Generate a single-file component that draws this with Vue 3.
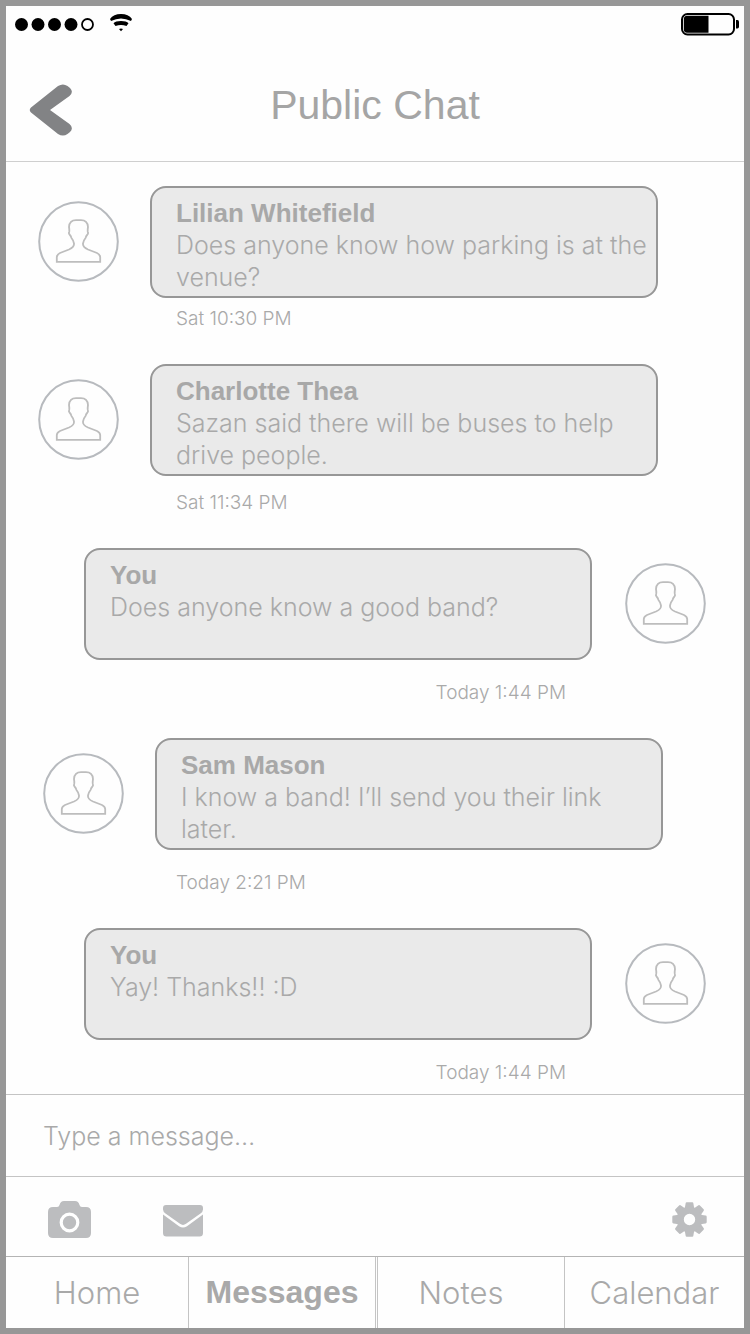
<script setup>
import { ref } from 'vue'

const draft = ref('')

const messages = [
  { author: 'Lilian Whitefield', text: 'Does anyone know how parking is at the venue?', time: 'Sat 10:30 PM', variant: 'tight' },
  { author: 'Charlotte Thea', text: 'Sazan said there will be buses to help drive people.', time: 'Sat 11:34 PM', variant: 'medium' },
  { author: 'You', text: 'Does anyone know a good band?', time: 'Today 1:44 PM', variant: 'own' },
  { author: 'Sam Mason', text: 'I know a band! I’ll send you their link later.', time: 'Today 2:21 PM', variant: 'inset' },
  { author: 'You', text: 'Yay! Thanks!! :D', time: 'Today 1:44 PM', variant: 'own' }
]

const tabs = [
  { label: 'Home', name: 'home' },
  { label: 'Messages', name: 'messages', active: true },
  { label: 'Notes', name: 'notes' },
  { label: 'Calendar', name: 'calendar' }
]
</script>

<template>
  <div class="screen">
    <div class="status">
      <svg class="signal" viewBox="0 0 120 24" width="120" height="24" aria-hidden="true">
        <circle cx="7.500" cy="12.500" r="6.500" />
        <circle cx="24" cy="12.500" r="6.500" />
        <circle cx="40.500" cy="12.500" r="6.500" />
        <circle cx="57" cy="12.500" r="6.500" />
        <circle cx="73.500" cy="12.500" r="5.500" fill="none" stroke="#000" stroke-width="1.800" />
        <path d="M96 7 Q99.500 2 107 2 Q114.500 2 118 7 L117 9 Q107 3.800 97 9 Z" />
        <path d="M99.500 11.300 Q101.500 9 107 9 Q112.500 9 114.500 11.300 L112.500 14 Q107 11.800 101.500 14 Z" />
        <path d="M105 17 Q107 16 109 17 L107 19.200 Z" />
      </svg>
      <svg class="battery" viewBox="0 0 58 24" width="58" height="24" aria-hidden="true">
        <rect x="1" y="2" width="52" height="20.500" rx="5.500" fill="none" stroke="#000" stroke-width="2" />
        <path d="M6 3.800 H27.500 V20.800 H6 Q2.800 20.800 2.800 17 V7.500 Q2.800 3.800 6 3.800 Z" />
        <path d="M55 8 H56.500 Q58 8 58 10 V14.500 Q58 16.500 56.500 16.500 H55 Z" />
      </svg>
    </div>

    <header class="header">
      <button class="back" type="button" aria-label="Back">
        <svg viewBox="0 0 44 52" width="44" height="52" aria-hidden="true">
          <path d="M29 2 Q34 -1 38.500 2 L41 4 Q45 8 40.500 12 L21 26 L40.500 40 Q45 44 41 48 L38.500 50 Q34 53 29 50 L2 28.500 Q-0.500 26 2 23.500 Z" fill="#828385" />
        </svg>
      </button>
      <h1>Public Chat</h1>
    </header>

    <ol class="messages">
      <li v-for="(message, index) in messages" :key="index" class="message" :class="message.variant">
        <svg class="avatar" viewBox="0 0 81 81" width="81" height="81" aria-hidden="true">
          <circle cx="40.500" cy="40.500" r="39.300" fill="none" stroke="#b7babe" stroke-width="2" />
          <path d="M18.800 60.800 V56 Q19 53.500 22 52 L31 48.500 Q36.500 46 36 42.500 Q35.500 39.500 33.500 37 Q32.700 34.500 31.500 33.500 Q30.500 32 31.200 31 Q31.500 29 31 26 Q31.500 19.200 38 19.200 H43 Q49.500 19.200 50 26 Q49.500 29 49.800 31 Q50.500 32 49.500 33.500 Q48.300 34.500 47.500 37 Q45.500 39.500 45 42.500 Q44.500 46 50 48.500 L59 52 Q62 53.500 62.200 56 V60.800 Z" fill="none" stroke="#bdbdbd" stroke-width="1.800" />
        </svg>
        <div class="body">
          <div class="bubble">
            <h2>{{ message.author }}</h2>
            <p>{{ message.text }}</p>
          </div>
          <time>{{ message.time }}</time>
        </div>
      </li>
    </ol>

    <form class="composer" @submit.prevent>
      <input v-model="draft" type="text" placeholder="Type a message…" aria-label="Type a message" />
    </form>

    <div class="tools">
      <button type="button" aria-label="Camera">
        <svg viewBox="0 0 43 37" width="43" height="37" aria-hidden="true">
          <path d="M5 6 H9 Q11 6 11.500 4 Q12.500 0 16 0 H27 Q30.500 0 31.500 4 Q32 6 34 6 H38 Q43 6 43 11 V32 Q43 37 38 37 H5 Q0 37 0 32 V11 Q0 6 5 6 Z" fill="#bcbdbf" />
          <circle cx="21.500" cy="21.500" r="8.300" fill="none" stroke="#fff" stroke-width="3.200" />
        </svg>
      </button>
      <button type="button" aria-label="Mail">
        <svg viewBox="0 -3 40 35" width="40" height="35" aria-hidden="true">
          <path d="M3 0 H37 Q40 0 40 3 V4.500 Q40 6.500 37.500 8.500 L23 18.800 Q20 21 17 18.800 L2.500 8.500 Q0 6.500 0 4.500 V3 Q0 0 3 0 Z" fill="#bcbdbf" />
          <path d="M0 9.500 L16 21.200 Q20 24 24 21.200 L40 9.500 V28 Q40 31.500 36.500 31.500 H3.500 Q0 31.500 0 28 Z" fill="#bcbdbf" />
        </svg>
      </button>
      <button class="settings" type="button" aria-label="Settings">
        <svg viewBox="-17.500 -17.500 35 35" width="35" height="35" aria-hidden="true">
          <g fill="#bcbdbf">
            <path v-for="angle in [0, 45, 90, 135, 180, 225, 270, 315]" :key="angle" :transform="`rotate(${angle})`" d="M-5.500 -10 Q-4.300 -12 -3.900 -16 Q-3.800 -17.200 -2.800 -17.200 H2.800 Q3.800 -17.200 3.900 -16 Q4.300 -12 5.500 -10 Z" />
          </g>
          <circle r="9.200" fill="none" stroke="#bcbdbf" stroke-width="7" />
        </svg>
      </button>
    </div>

    <nav class="tabs">
      <a v-for="tab in tabs" :key="tab.name" :href="`#${tab.name}`" :class="[`tab-${tab.name}`, { active: tab.active }]">{{ tab.label }}</a>
    </nav>
  </div>
</template>

<style>
body {
  margin: 0;
}
</style>

<style scoped>
.screen {
  box-sizing: border-box;
  min-height: 100vh;
  display: flex;
  flex-direction: column;
  border: 6px solid #979797;
  background: #fefefe;
  color: #a9a9a9;
  font-family: Inter, "Liberation Sans", Arial, sans-serif;
  font-weight: 300;
}

button {
  display: flex;
  padding: 0;
  border: 0;
  background: none;
}

.status {
  display: flex;
  justify-content: space-between;
  padding: 6px 5px 6px 8px;
}

.header {
  display: grid;
  grid-template-columns: 44px 1fr 44px;
  align-items: center;
  height: 120px;
  padding: 0 23px;
  border-bottom: 1px solid #cfcfcf;
  box-sizing: border-box;
}

.back {
  margin-top: 16px;
}

h1 {
  margin: 6px 0 0;
  text-align: center;
  font: 400 41px/48px "Liberation Sans", Arial, sans-serif;
  color: #a5a5a5;
}

.messages {
  flex: 1;
  display: flex;
  flex-direction: column;
  gap: 33px;
  margin: 0;
  padding: 24px 0 8px;
  list-style: none;
}

.message {
  display: flex;
  align-items: flex-start;
  gap: 31px;
  padding: 0 86px 0 32px;
}

.message.inset {
  padding: 0 81px 0 37px;
}

.message.own {
  flex-direction: row-reverse;
  gap: 33px;
  padding: 0 38px 0 78px;
}

.avatar {
  flex: none;
  margin-top: 15px;
}

.body {
  flex: 1;
  display: flex;
  flex-direction: column;
  gap: 21px;
}

.tight .body {
  gap: 9px;
}

.medium .body {
  gap: 15px;
}

.bubble {
  box-sizing: border-box;
  min-height: 112px;
  padding: 9px 8px 3px 24px;
  border: 2px solid #979797;
  border-radius: 16px;
  background: #eaeaea;
}

h2 {
  margin: 0;
  font: 700 26px/32px "Liberation Sans", Arial, sans-serif;
  color: #a8a8a8;
}

p {
  margin: 0;
  font-size: 25px;
  line-height: 32px;
}

time {
  padding: 0 26px;
  font-size: 19px;
  line-height: 24px;
}

.inset time {
  padding: 0 21px;
}

.own time {
  text-align: right;
}

.composer {
  display: flex;
  height: 81px;
  border-top: 1px solid #c4c4c4;
}

.composer input {
  flex: 1;
  min-width: 0;
  padding: 0 37px;
  border: 0;
  outline: 0;
  background: none;
  color: #a9a9a9;
  font: inherit;
  font-size: 25px;
}

.composer input::placeholder {
  color: #a9a9a9;
  opacity: 1;
}

.tools {
  display: flex;
  align-items: center;
  gap: 72px;
  height: 80px;
  padding: 6px 37px 0 42px;
  box-sizing: border-box;
  border-top: 1px solid #c4c4c4;
}

.settings {
  margin-left: auto;
}

.tabs {
  display: grid;
  grid-template-columns: 183fr 187fr 189fr 179fr;
  height: 71px;
  border-top: 1px solid #b4b4b4;
}

.tabs a {
  display: flex;
  align-items: center;
  justify-content: center;
  border-right: 1px solid #c4c4c4;
  color: #a9a9a9;
  font-size: 31px;
  text-decoration: none;
}

.tabs .active {
  font: 700 32px "Liberation Sans", Arial, sans-serif;
}

.tabs .tab-notes {
  margin-left: 1px;
  padding-right: 20px;
  border-left: 1px solid #c4c4c4;
}

.tabs .tab-calendar {
  border-right: 0;
}
</style>
